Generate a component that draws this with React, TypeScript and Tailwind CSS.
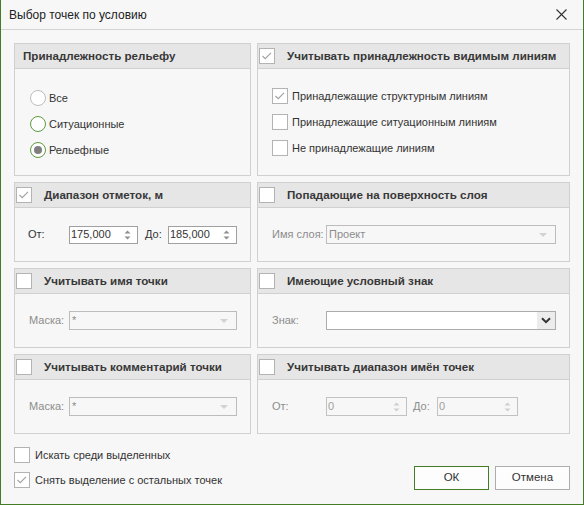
import React from "react";

function Box({ checked = false }: { checked?: boolean }) {
  return (
    <span className="w-[16px] h-[16px] border border-[#b3b3b3] bg-white flex items-center justify-center shrink-0">
      {checked && (
        <svg width="14" height="14" viewBox="0 0 14 14">
          <path d="M2.5 7 L5.2 9.6 L11 3.8" fill="none" stroke="#a3a3a3" strokeWidth="1.2" />
        </svg>
      )}
    </span>
  );
}

function Radio({ ring, dot = false }: { ring: string; dot?: boolean }) {
  return (
    <span className={"w-[16px] h-[16px] rounded-full border bg-white flex items-center justify-center shrink-0 " + ring}>
      {dot && <span className="w-[8px] h-[8px] rounded-full bg-[#7f7f7f]" />}
    </span>
  );
}

function Arrows({ color }: { color: string }) {
  return (
    <svg width="7" height="12" viewBox="0 0 7 12" className="mr-[6px] shrink-0">
      <path d="M0.5 4.5 L3.5 1.5 L6.5 4.5 Z" fill={color} />
      <path d="M0.5 7.5 L3.5 10.5 L6.5 7.5 Z" fill={color} />
    </svg>
  );
}

function Spin({ value, w, h, disabled = false }: { value: string; w: string; h: string; disabled?: boolean }) {
  return (
    <div
      className={
        "flex items-center border shrink-0 " +
        w +
        " " +
        h +
        (disabled ? " border-[#c2c2c2] bg-[#f7f7f7] text-[#a0a0a0]" : " border-[#a0a0a0] bg-white text-[#333333]")
      }
    >
      <span className="flex-1 pl-[1px] leading-none">{value}</span>
      <Arrows color={disabled ? "#d0d0d0" : "#8e8e8e"} />
    </div>
  );
}

function DisCombo({ value, w }: { value: string; w: string }) {
  return (
    <div className={"flex items-center h-[19px] border border-[#bcbcbc] bg-[#f7f7f7] text-[#8c8c8c] shrink-0 " + w}>
      <span className="flex-1 pl-[2px] leading-none">{value}</span>
      <svg width="8" height="4" viewBox="0 0 8 4" className="mr-[8px]">
        <path d="M0 0 L8 0 L4 4 Z" fill="#d2d2d2" />
      </svg>
    </div>
  );
}

function Group({
  title,
  check,
  checked = false,
  children,
  body,
}: {
  title: string;
  check: boolean;
  checked?: boolean;
  children?: React.ReactNode;
  body: string;
}) {
  return (
    <div className="border border-[#d0d0d0] flex flex-col bg-[#f7f7f7]">
      <div className="h-[25px] bg-[#e6e6e6] border-b border-[#d0d0d0] flex items-center shrink-0">
        {check ? (
          <>
            <span className="ml-[1px]">
              <Box checked={checked} />
            </span>
            <span className="ml-[12px] font-bold text-[11.6px] text-[#383838] whitespace-nowrap">{title}</span>
          </>
        ) : (
          <span className="ml-[8px] font-bold text-[11.6px] text-[#383838] whitespace-nowrap">{title}</span>
        )}
      </div>
      <div className={"flex-1 whitespace-nowrap " + body}>{children}</div>
    </div>
  );
}

export default function App() {
  return (
    <div className="w-[584px] h-[505px] bg-[#f7f7f7] border-l border-r border-b border-[#437c25] flex flex-col font-['Liberation_Sans',Arial,sans-serif] text-[11px] text-[#333333]">
      <div className="h-[30px] border-b border-[#d3d3d3] flex items-center justify-between pl-[8px] pr-[16px] shrink-0">
        <span className="text-[#222222] text-[12px]">Выбор точек по условию</span>
        <svg width="11" height="11" viewBox="0 0 11 11">
          <path d="M0.5 0.5 L10.5 10.5 M10.5 0.5 L0.5 10.5" stroke="#333333" strokeWidth="1.1" />
        </svg>
      </div>

      <div className="px-[13px] pt-[13px] flex flex-col">
        <div className="grid grid-cols-[237px_313px] grid-rows-[133px_80px_80px_80px] gap-[6px]">
          <Group title="Принадлежность рельефу" check={false} body="pl-[15px] pt-[16px] flex flex-col">
            <div className="h-[26px] flex items-center gap-[3px]">
              <Radio ring="border-[#bdbdbd]" />
              <span>Все</span>
            </div>
            <div className="h-[26px] flex items-center gap-[3px]">
              <Radio ring="border-[#5e9a3e]" />
              <span>Ситуационные</span>
            </div>
            <div className="h-[26px] flex items-center gap-[3px]">
              <Radio ring="border-[#5e9a3e]" dot />
              <span>Рельефные</span>
            </div>
          </Group>

          <Group title="Учитывать принадлежность видимым линиям" check checked body="pl-[14px] pt-[14px] flex flex-col">
            <div className="h-[26px] flex items-center gap-[4px]">
              <Box checked />
              <span>Принадлежащие структурным линиям</span>
            </div>
            <div className="h-[26px] flex items-center gap-[4px]">
              <Box />
              <span>Принадлежащие ситуационным линиям</span>
            </div>
            <div className="h-[26px] flex items-center gap-[4px]">
              <Box />
              <span>Не принадлежащие линиям</span>
            </div>
          </Group>

          <Group title="Диапазон отметок, м" check checked body="pl-[13px] flex items-center">
            <span className="w-[41px] shrink-0">От:</span>
            <Spin value="175,000" w="w-[69px]" h="h-[18px]" />
            <span className="ml-[7px] w-[23px] shrink-0">До:</span>
            <Spin value="185,000" w="w-[69px]" h="h-[18px]" />
          </Group>

          <Group title="Попадающие на поверхность слоя" check body="pl-[14px] flex items-center">
            <span className="w-[54px] shrink-0 text-[#8c8c8c]">Имя слоя:</span>
            <DisCombo value="Проект" w="w-[230px]" />
          </Group>

          <Group title="Учитывать имя точки" check body="pl-[14px] flex items-center">
            <span className="w-[40px] shrink-0 text-[#8c8c8c]">Маска:</span>
            <DisCombo value="*" w="w-[168px]" />
          </Group>

          <Group title="Имеющие условный знак" check body="pl-[14px] flex items-center">
            <span className="w-[54px] shrink-0 text-[#8c8c8c]">Знак:</span>
            <div className="w-[230px] h-[19px] border border-[#acacac] bg-white flex justify-end shrink-0">
              <div className="w-[18px] h-full bg-[#ececec] flex items-center justify-center">
                <svg width="10" height="7" viewBox="0 0 10 7">
                  <path d="M1 1.2 L5 5.2 L9 1.2" fill="none" stroke="#333333" strokeWidth="2" />
                </svg>
              </div>
            </div>
          </Group>

          <Group title="Учитывать комментарий точки" check body="pl-[14px] flex items-center">
            <span className="w-[40px] shrink-0 text-[#8c8c8c]">Маска:</span>
            <DisCombo value="*" w="w-[168px]" />
          </Group>

          <Group title="Учитывать диапазон имён точек" check body="pl-[14px] flex items-center">
            <span className="w-[54px] shrink-0 text-[#8c8c8c]">От:</span>
            <Spin value="0" w="w-[81px]" h="h-[19px]" disabled />
            <span className="ml-[6px] w-[24px] shrink-0 text-[#8c8c8c]">До:</span>
            <Spin value="0" w="w-[81px]" h="h-[19px]" disabled />
          </Group>
        </div>

        <div className="mt-[11px] flex items-end justify-between">
          <div className="flex flex-col gap-[5px]">
            <div className="h-[20px] flex items-center gap-[5px]">
              <Box />
              <span>Искать среди выделенных</span>
            </div>
            <div className="h-[20px] flex items-center gap-[5px]">
              <Box checked />
              <span>Снять выделение с остальных точек</span>
            </div>
          </div>
          <div className="flex gap-[6px]">
            <button className="w-[75px] h-[24px] border border-[#437c25] bg-[#fdfdfd] text-[#333333] text-[11.5px]">ОК</button>
            <button className="w-[75px] h-[24px] border border-[#adadad] bg-[#fdfdfd] text-[#333333] text-[11.5px]">Отмена</button>
          </div>
        </div>
      </div>
    </div>
  );
}
